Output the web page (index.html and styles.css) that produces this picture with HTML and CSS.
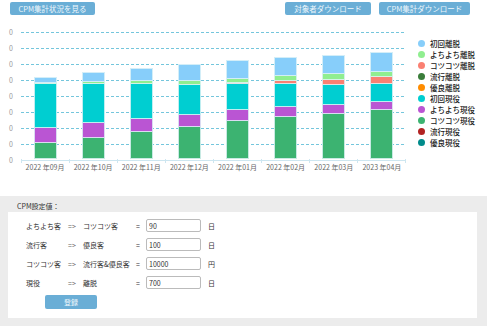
FILE: index.html
```html
<!DOCTYPE html>
<html lang="ja">
<head>
    <meta charset="UTF-8">
    <title>CPM集計</title>
    <link rel="stylesheet" href="styles.css">
</head>
<body>
    <div class="toolbar">
        <button class="btn btn-wide">CPM集計状況を見る</button>
        <div class="toolbar-right">
            <button class="btn btn-dl">対象者ダウンロード</button>
            <button class="btn btn-dl2">CPM集計ダウンロード</button>
        </div>
    </div>

    <div class="chart-area">
        <div class="chart">
            <div class="plot">
                <div class="grid">
                    <div class="gridline"><span class="tick-label">0</span><span class="line"></span></div>
                    <div class="gridline"><span class="tick-label">0</span><span class="line"></span></div>
                    <div class="gridline"><span class="tick-label">0</span><span class="line"></span></div>
                    <div class="gridline"><span class="tick-label">0</span><span class="line"></span></div>
                    <div class="gridline"><span class="tick-label">0</span><span class="line"></span></div>
                    <div class="gridline"><span class="tick-label">0</span><span class="line"></span></div>
                    <div class="gridline"><span class="tick-label">0</span><span class="line"></span></div>
                    <div class="gridline"><span class="tick-label">0</span><span class="line"></span></div>
                    <div class="gridline axis"><span class="tick-label">0</span><span class="line"></span></div>
                </div>

                <!-- stacked bars: top segment first -->
                <div class="bars">
                    <div class="slot"><div class="bar">
                        <div class="seg c-lblue" style="height:6px"></div>
                        <div class="seg c-lgreen" style="height:1px"></div>
                        <div class="seg c-cyan" style="height:44px"></div>
                        <div class="seg c-purple" style="height:15px"></div>
                        <div class="seg c-green" style="height:16px"></div>
                    </div></div>
                    <div class="slot"><div class="bar">
                        <div class="seg c-lblue" style="height:10px"></div>
                        <div class="seg c-lgreen" style="height:2px"></div>
                        <div class="seg c-cyan" style="height:39px"></div>
                        <div class="seg c-purple" style="height:15px"></div>
                        <div class="seg c-green" style="height:21px"></div>
                    </div></div>
                    <div class="slot"><div class="bar">
                        <div class="seg c-lblue" style="height:13px"></div>
                        <div class="seg c-lgreen" style="height:3px"></div>
                        <div class="seg c-cyan" style="height:35px"></div>
                        <div class="seg c-purple" style="height:13px"></div>
                        <div class="seg c-green" style="height:27px"></div>
                    </div></div>
                    <div class="slot"><div class="bar">
                        <div class="seg c-lblue" style="height:17px"></div>
                        <div class="seg c-lgreen" style="height:4px"></div>
                        <div class="seg c-cyan" style="height:30px"></div>
                        <div class="seg c-purple" style="height:12px"></div>
                        <div class="seg c-green" style="height:32px"></div>
                    </div></div>
                    <div class="slot"><div class="bar">
                        <div class="seg c-lblue" style="height:19px"></div>
                        <div class="seg c-lgreen" style="height:4px"></div>
                        <div class="seg c-salmon" style="height:1px"></div>
                        <div class="seg c-cyan" style="height:26px"></div>
                        <div class="seg c-purple" style="height:11px"></div>
                        <div class="seg c-green" style="height:38px"></div>
                    </div></div>
                    <div class="slot"><div class="bar">
                        <div class="seg c-lblue" style="height:19px"></div>
                        <div class="seg c-lgreen" style="height:5px"></div>
                        <div class="seg c-salmon" style="height:3px"></div>
                        <div class="seg c-cyan" style="height:23px"></div>
                        <div class="seg c-purple" style="height:10px"></div>
                        <div class="seg c-green" style="height:42px"></div>
                    </div></div>
                    <div class="slot"><div class="bar">
                        <div class="seg c-lblue" style="height:19px"></div>
                        <div class="seg c-lgreen" style="height:6px"></div>
                        <div class="seg c-salmon" style="height:5px"></div>
                        <div class="seg c-cyan" style="height:20px"></div>
                        <div class="seg c-purple" style="height:9px"></div>
                        <div class="seg c-green" style="height:45px"></div>
                    </div></div>
                    <div class="slot"><div class="bar">
                        <div class="seg c-lblue" style="height:20px"></div>
                        <div class="seg c-lgreen" style="height:5px"></div>
                        <div class="seg c-salmon" style="height:7px"></div>
                        <div class="seg c-cyan" style="height:18px"></div>
                        <div class="seg c-purple" style="height:8px"></div>
                        <div class="seg c-green" style="height:49px"></div>
                    </div></div>
                </div>
            </div>

            <div class="xticks">
                <span></span><span></span><span></span><span></span>
                <span></span><span></span><span></span><span></span>
            </div>
            <div class="xlabels">
                <span>2022 年09月</span>
                <span>2022 年10月</span>
                <span>2022 年11月</span>
                <span>2022 年12月</span>
                <span>2022 年01月</span>
                <span>2022 年02月</span>
                <span>2022 年03月</span>
                <span>2023 年04月</span>
            </div>
        </div>

        <ul class="legend">
            <li><i class="dot c-lblue"></i>初回離脱</li>
            <li><i class="dot c-lgreen"></i>よちよち離脱</li>
            <li><i class="dot c-salmon"></i>コツコツ離脱</li>
            <li><i class="dot c-dgreen"></i>流行離脱</li>
            <li><i class="dot c-orange"></i>優良離脱</li>
            <li><i class="dot c-cyan"></i>初回現役</li>
            <li><i class="dot c-purple"></i>よちよち現役</li>
            <li><i class="dot c-green"></i>コツコツ現役</li>
            <li><i class="dot c-red"></i>流行現役</li>
            <li><i class="dot c-teal"></i>優良現役</li>
        </ul>
    </div>

    <section class="cpm-panel">
        <div class="panel-title">CPM設定値：</div>
        <div class="panel-body">
            <div class="cpm-row">
                <span>よちよち客</span><span class="arrow">=&gt;</span><span>コツコツ客</span>
                <span class="eq">=</span><input class="cpm-input" type="text" value="90"><span class="unit">日</span>
            </div>
            <div class="cpm-row">
                <span>流行客</span><span class="arrow">=&gt;</span><span>優良客</span>
                <span class="eq">=</span><input class="cpm-input" type="text" value="100"><span class="unit">日</span>
            </div>
            <div class="cpm-row">
                <span>コツコツ客</span><span class="arrow">=&gt;</span><span>流行客&amp;優良客</span>
                <span class="eq">=</span><input class="cpm-input" type="text" value="10000"><span class="unit">円</span>
            </div>
            <div class="cpm-row">
                <span>現役</span><span class="arrow">=&gt;</span><span>離脱</span>
                <span class="eq">=</span><input class="cpm-input" type="text" value="700"><span class="unit">日</span>
            </div>
            <button class="btn btn-save">登録</button>
        </div>
    </section>
</body>
</html>
```

FILE: styles.css
```css
body {
    margin: 0;
    width: 487px;
    font-family: "Noto Sans CJK JP", "Noto Sans", sans-serif;
    font-size: 7px;
    color: #333;
    background-color: #fff;
}

/* buttons */
.btn {
    font-family: inherit;
    font-size: 7.5px;
    color: #eef7fc;
    background-color: #6aaed6;
    border: none;
    border-radius: 2px;
    height: 13px;
    padding: 0;
    line-height: 13px;
    cursor: pointer;
}
.toolbar {
    display: flex;
    justify-content: space-between;
    padding: 2px 17px 0 10px;
    height: 15px;
}
.toolbar-right {
    display: flex;
    gap: 8px;
}
.btn-wide { width: 85px; }
.btn-dl { width: 86px; }
.btn-dl2 { width: 91px; }

/* chart */
.chart-area {
    display: flex;
    padding-top: 15px;
}
.chart {
    width: 406px;
}
.plot {
    position: relative;
    height: 127px;
}
.grid {
    display: flex;
    flex-direction: column;
    justify-content: space-between;
    height: 128px;
}
.gridline {
    display: flex;
    align-items: center;
    height: 0;
}
.tick-label {
    width: 13px;
    padding-right: 8px;
    text-align: right;
    color: #999;
    line-height: 8px;
}
.line {
    flex: 1;
    height: 1px;
    background-image: repeating-linear-gradient(to right, #74c6dc 0 3px, transparent 3px 5px);
}
.gridline.axis .line {
    background: #cde6f0;
}
.bars {
    position: absolute;
    left: 21px;
    right: 0;
    top: 0;
    bottom: 0;
    display: flex;
}
.slot {
    flex: 1;
    display: flex;
    justify-content: center;
    align-items: flex-end;
}
.bar {
    width: 23px;
    display: flex;
    flex-direction: column;
}
.seg {
    box-sizing: border-box;
    border: 1px solid rgba(225, 243, 247, 0.85);
    border-top-width: 0;
}
.seg:first-child {
    border-top-width: 1px;
}

.xticks, .xlabels {
    display: flex;
    margin-left: 21px;
}
.xticks span {
    flex: 1;
    height: 4px;
    border-left: 1px solid #cde6f0;
}
.xticks span:last-child {
    border-right: 1px solid #cde6f0;
}
.xlabels span {
    flex: 1;
    text-align: center;
    color: #666;
    line-height: 9px;
}

/* colours */
.c-lblue { background-color: #87cefa; }
.c-lgreen { background-color: #90ee90; }
.c-salmon { background-color: #fa8072; }
.c-dgreen { background-color: #3a7d3a; }
.c-orange { background-color: #ff8c00; }
.c-cyan { background-color: #00ced1; }
.c-purple { background-color: #ba55d3; }
.c-green { background-color: #3cb371; }
.c-red { background-color: #b22222; }
.c-teal { background-color: #008b8b; }

/* legend */
.legend {
    list-style: none;
    margin: 6px 0 0 12px;
    padding: 0;
}
.legend li {
    display: flex;
    align-items: center;
    gap: 5px;
    height: 11px;
    font-size: 7.5px;
    font-weight: 500;
    color: #222;
}
.dot {
    width: 7px;
    height: 7px;
    border-radius: 50%;
}

/* CPM settings */
.cpm-panel {
    margin-top: 24px;
    background-color: #ececec;
    padding: 0 10px 8px 8px;
}
.panel-title {
    padding: 6px 0 2px 9px;
    line-height: 8px;
}
.panel-body {
    background-color: #fff;
    padding: 7px 0 9px 18px;
}
.cpm-row {
    display: grid;
    grid-template-columns: 42px 15px 53px 10px 55px auto;
    align-items: center;
    height: 13px;
    margin-bottom: 6px;
}
.arrow {
    color: #666;
}
.cpm-input {
    box-sizing: border-box;
    width: 55px;
    height: 13px;
    padding: 0 0 0 2px;
    border: 1px solid #bbb;
    border-radius: 2px;
    font-family: inherit;
    font-size: 7px;
    color: #333;
}
.unit {
    padding-left: 7px;
}
.btn-save {
    display: block;
    width: 52px;
    height: 14px;
    margin: 1px 0 0 19px;
    font-size: 7px;
}
```
